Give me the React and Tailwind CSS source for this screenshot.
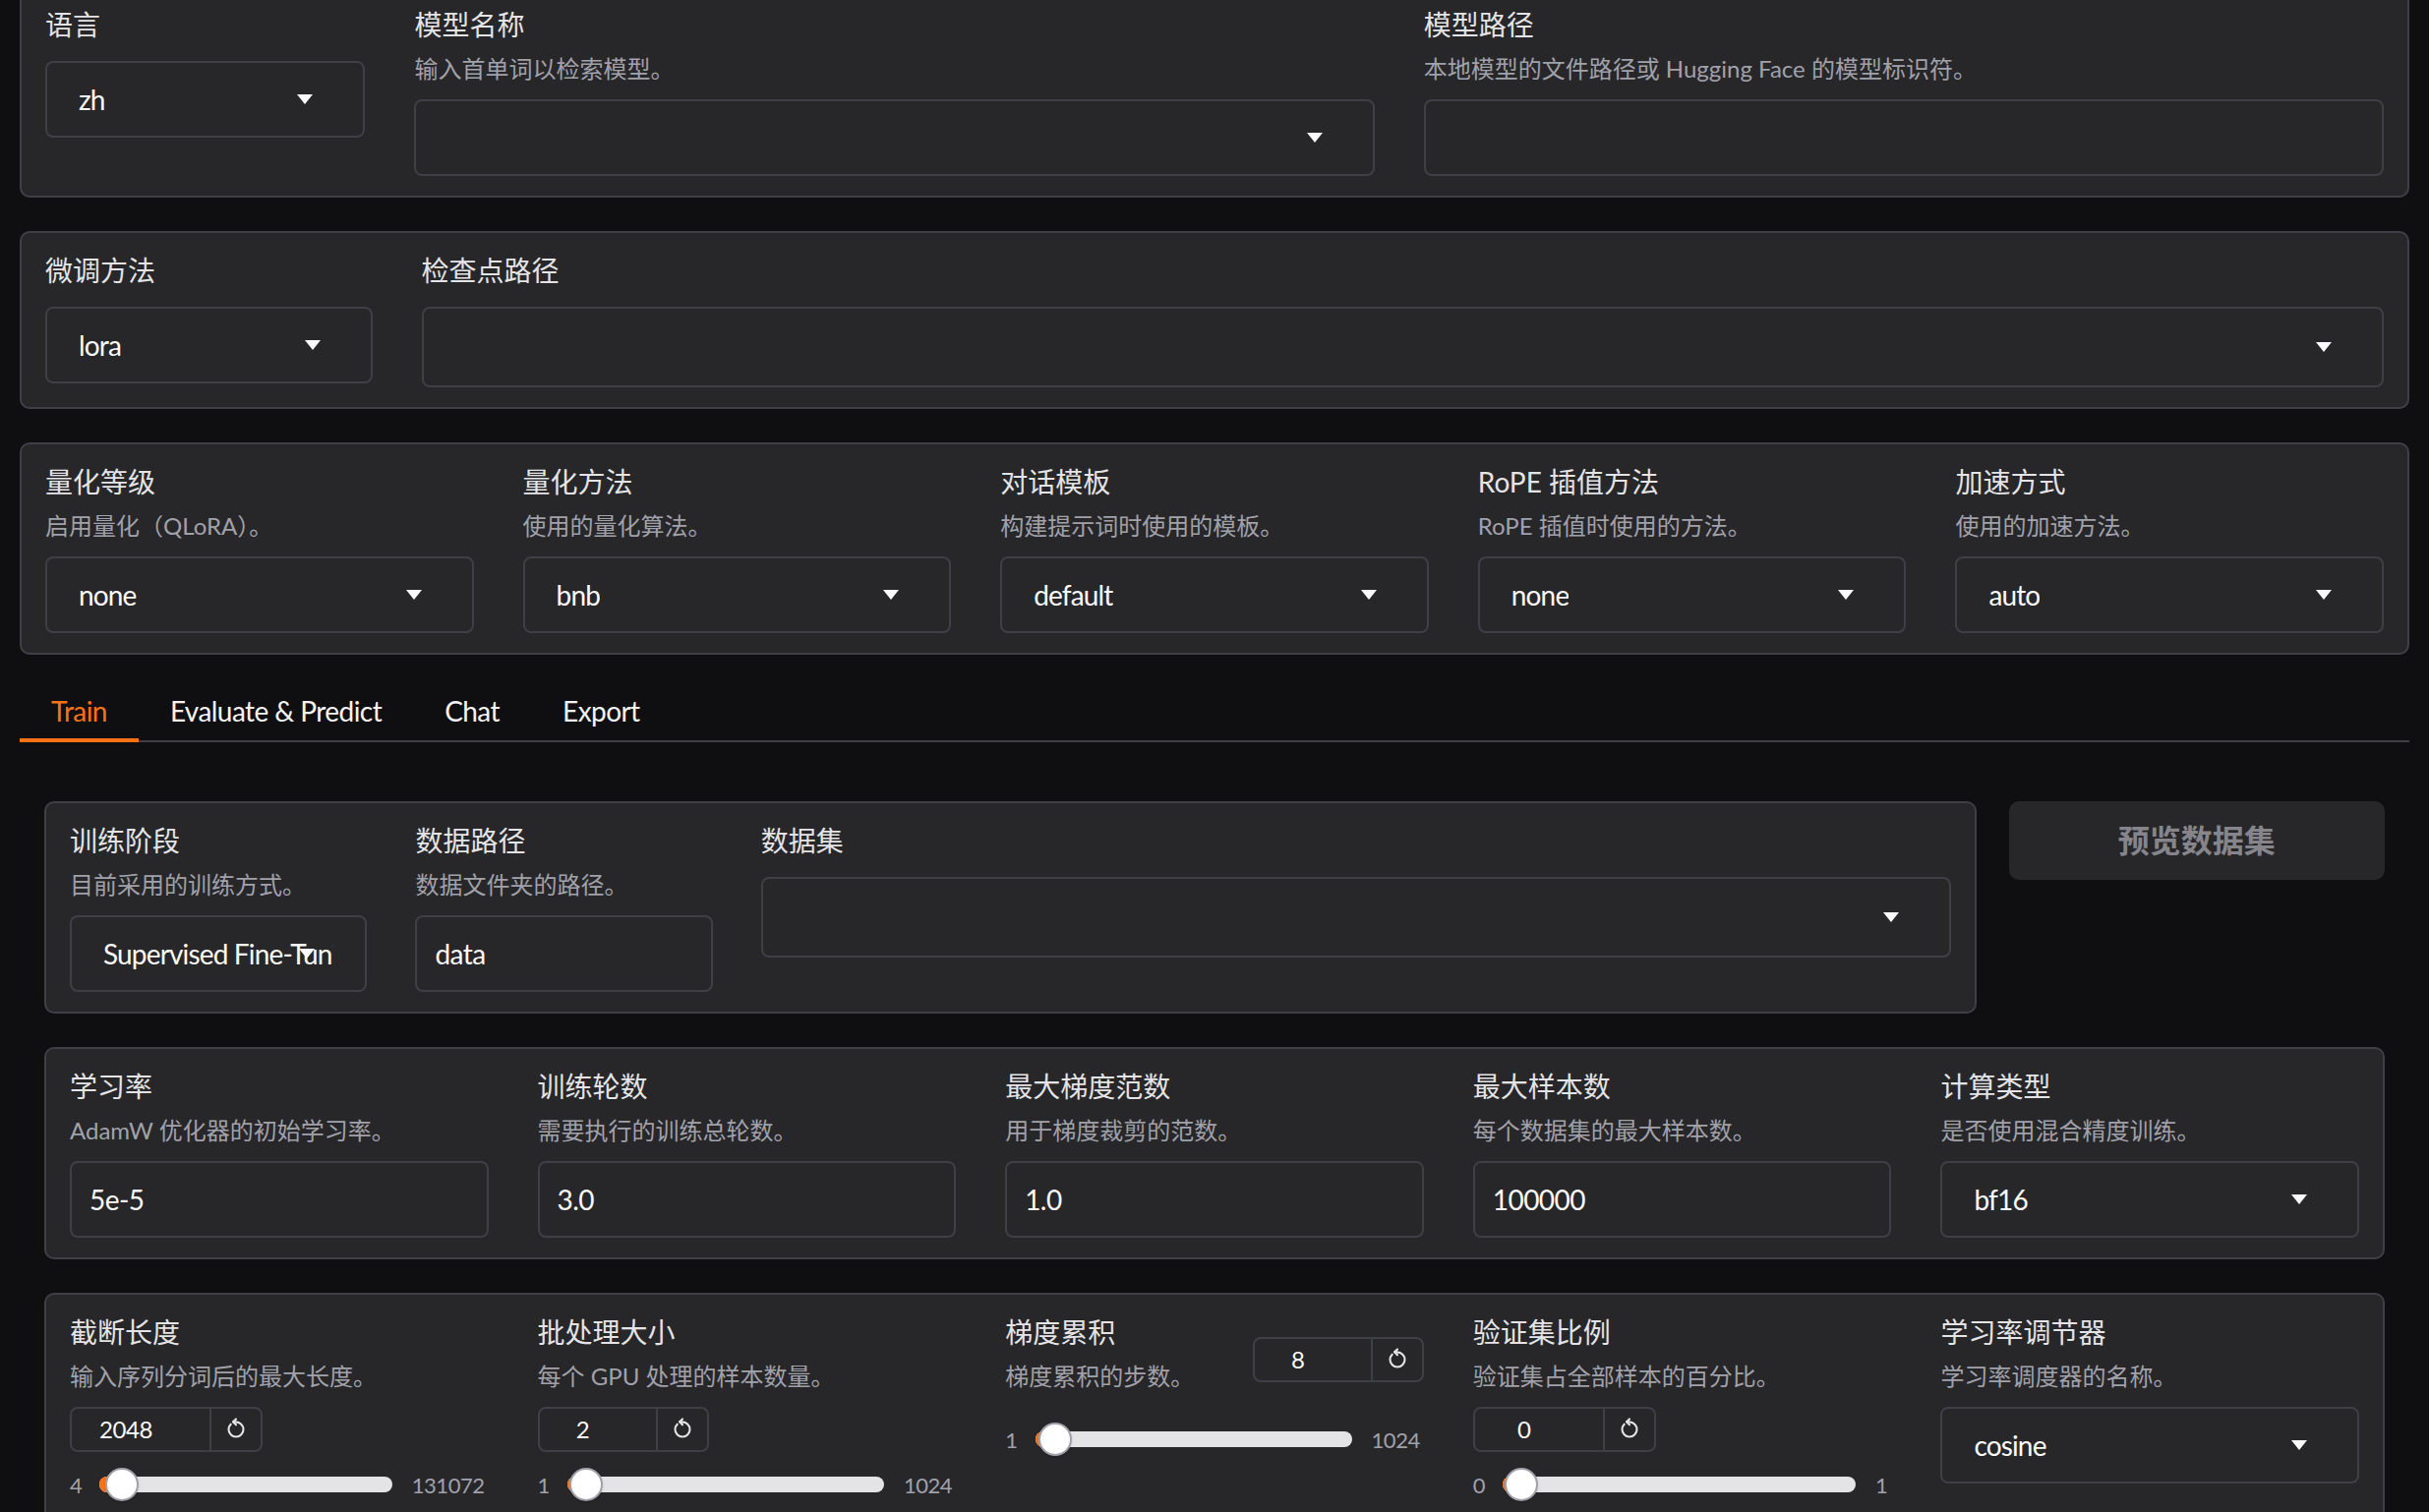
import { RotateCcw } from 'lucide-react';

const font = "font-['Lato','Noto_Sans_CJK_SC',sans-serif]";
const panel = 'rounded-[10px] border-2 border-[#3f3f46] bg-[#27272a] px-[24px] pt-[18px] pb-[20px]';

function Label({ children }) {
  return <div className="h-[40px] whitespace-nowrap text-[28px] leading-[40px] text-[#e4e4e7]">{children}</div>;
}

function Info({ children }) {
  return <div className="mt-[8px] h-[34px] whitespace-nowrap text-[24px] leading-[34px] text-[#a1a1aa]">{children}</div>;
}

function Caret() {
  return (
    <svg width="16" height="10" viewBox="0 0 16 10" className="absolute right-[51px] top-1/2 -translate-y-1/2">
      <polygon points="0,0 16,0 8,10" fill="#fafafa" />
    </svg>
  );
}

function Dropdown({ value, tall }) {
  return (
    <div className={`relative flex items-center rounded-[8px] border-2 border-[#3f3f46] bg-[#27272a] px-[32px] ${tall ? 'h-[82px]' : 'h-[78px]'}`}>
      <span className="min-w-0 overflow-hidden whitespace-nowrap text-[28px] tracking-[-0.03em] text-[#fafafa]">{value}</span>
      <Caret />
    </div>
  );
}

function TextBox({ value }) {
  return (
    <div className="flex h-[78px] items-center rounded-[8px] border-2 border-[#3f3f46] bg-[#27272a] px-[18px]">
      <span className="whitespace-nowrap text-[28px] tracking-[-0.02em] text-[#fafafa]">{value}</span>
    </div>
  );
}

function Field({ label, info, children }) {
  return (
    <div className="flex min-w-0 flex-col">
      <div className={info ? 'pb-[14px]' : 'pb-[17px]'}>
        <Label>{label}</Label>
        {info && <Info>{info}</Info>}
      </div>
      {children}
    </div>
  );
}

function NumberBox({ value, width }) {
  return (
    <div className={`flex h-[46px] rounded-[8px] border-2 border-[#3f3f46] ${width}`}>
      <div className="flex flex-1 items-center justify-center pr-[30px] text-[24px] tracking-[-0.02em] text-[#fafafa]">{value}</div>
      <div className="flex w-[52px] items-center justify-center border-l-2 border-[#3f3f46]">
        <RotateCcw size={20} strokeWidth={2.5} className="rotate-45 text-[#e4e4e7]" />
      </div>
    </div>
  );
}

function Slider({ min, max, frac }) {
  return (
    <div className="mt-[13px] flex h-[40px] items-center pr-[4px] text-[22px] tracking-[-0.02em] text-[#a1a1aa]">
      <span>{min}</span>
      <div className="relative ml-[18px] mr-[20px] h-[16px] flex-1 rounded-full bg-[#e4e4e7]">
        <div
          className="absolute inset-y-0 left-0 rounded-l-full bg-[#f97316]"
          style={{ width: `calc(19px + ${frac} * (100% - 36px))` }}
        />
        <div
          className="absolute top-1/2 h-[34px] w-[34px] -translate-y-1/2 rounded-full border-2 border-[#a1a1aa] bg-white shadow"
          style={{ left: `calc(2px + ${frac} * (100% - 36px))` }}
        />
      </div>
      <span>{max}</span>
    </div>
  );
}

function SliderField({ label, info, value, boxW, min, max, frac }) {
  return (
    <div className="flex min-w-0 flex-col">
      <div className="flex flex-wrap items-center justify-between">
        <div className="pb-[14px]">
          <Label>{label}</Label>
          <Info>{info}</Info>
        </div>
        <NumberBox value={value} width={boxW} />
      </div>
      <Slider min={min} max={max} frac={frac} />
    </div>
  );
}

export default function App() {
  const tabs = ['Train', 'Evaluate & Predict', 'Chat', 'Export'];

  return (
    <div className={`${font} flex h-[1538px] flex-col overflow-hidden bg-[#0f0f11] px-[20px]`}>
      <div className="-mt-[15px] flex flex-col gap-[34px]">
        <div className={`${panel} grid grid-cols-[minmax(0,1fr)_minmax(0,3fr)_minmax(0,3fr)] gap-x-[50px]`}>
          <Field label="语言">
            <Dropdown value="zh" />
          </Field>
          <Field label="模型名称" info="输入首单词以检索模型。">
            <Dropdown value="" />
          </Field>
          <Field label="模型路径" info="本地模型的文件路径或 Hugging Face 的模型标识符。">
            <TextBox value="" />
          </Field>
        </div>

        <div className={`${panel} grid grid-cols-[minmax(0,1fr)_minmax(0,6fr)] gap-x-[50px]`}>
          <Field label="微调方法">
            <Dropdown value="lora" />
          </Field>
          <Field label="检查点路径">
            <Dropdown value="" tall />
          </Field>
        </div>

        <div className={`${panel} grid grid-cols-5 gap-x-[50px]`}>
          <Field label="量化等级" info="启用量化（QLoRA）。">
            <Dropdown value="none" />
          </Field>
          <Field label="量化方法" info="使用的量化算法。">
            <Dropdown value="bnb" />
          </Field>
          <Field label="对话模板" info="构建提示词时使用的模板。">
            <Dropdown value="default" />
          </Field>
          <Field label="RoPE 插值方法" info="RoPE 插值时使用的方法。">
            <Dropdown value="none" />
          </Field>
          <Field label="加速方式" info="使用的加速方法。">
            <Dropdown value="auto" />
          </Field>
        </div>
      </div>

      <div className="mt-[27px] flex border-b-2 border-[#3f3f46]">
        {tabs.map((t, i) => (
          <div
            key={t}
            className={`relative flex h-[60px] items-center px-[32px] text-[28px] tracking-[-0.02em] ${i === 0 ? 'text-[#f97316]' : 'text-[#f4f4f5]'}`}
          >
            {t}
            {i === 0 && <div className="absolute inset-x-0 -bottom-[2px] h-[4px] bg-[#f97316]" />}
          </div>
        ))}
      </div>

      <div className="flex flex-col gap-[34px] px-[25px] pt-[60px]">
        <div className="flex items-start gap-[33px]">
          <div className={`${panel} grid min-w-0 flex-[5] grid-cols-[minmax(0,1fr)_minmax(0,1fr)_minmax(0,4fr)] gap-x-[49px]`}>
            <Field label="训练阶段" info="目前采用的训练方式。">
              <Dropdown value="Supervised Fine-Tuning" />
            </Field>
            <Field label="数据路径" info="数据文件夹的路径。">
              <TextBox value="data" />
            </Field>
            <Field label="数据集">
              <Dropdown value="" tall />
            </Field>
          </div>
          <div className="min-w-0 flex-[1]">
            <button className="flex h-[80px] w-full items-center justify-center rounded-[10px] bg-[#27272a] text-[32px] font-bold text-[#85858b]">
              预览数据集
            </button>
          </div>
        </div>

        <div className={`${panel} grid grid-cols-5 gap-x-[50px]`}>
          <Field label="学习率" info="AdamW 优化器的初始学习率。">
            <TextBox value="5e-5" />
          </Field>
          <Field label="训练轮数" info="需要执行的训练总轮数。">
            <TextBox value="3.0" />
          </Field>
          <Field label="最大梯度范数" info="用于梯度裁剪的范数。">
            <TextBox value="1.0" />
          </Field>
          <Field label="最大样本数" info="每个数据集的最大样本数。">
            <TextBox value="100000" />
          </Field>
          <Field label="计算类型" info="是否使用混合精度训练。">
            <Dropdown value="bf16" />
          </Field>
        </div>

        <div className={`${panel} grid grid-cols-5 gap-x-[50px]`}>
          <SliderField label="截断长度" info="输入序列分词后的最大长度。" value="2048" boxW="w-[196px]" min="4" max="131072" frac={0.0156} />
          <SliderField label="批处理大小" info="每个 GPU 处理的样本数量。" value="2" boxW="w-[174px]" min="1" max="1024" frac={0.001} />
          <SliderField label="梯度累积" info="梯度累积的步数。" value="8" boxW="w-[174px]" min="1" max="1024" frac={0.0068} />
          <SliderField label="验证集比例" info="验证集占全部样本的百分比。" value="0" boxW="w-[186px]" min="0" max="1" frac={0} />
          <Field label="学习率调节器" info="学习率调度器的名称。">
            <Dropdown value="cosine" />
          </Field>
        </div>
      </div>
    </div>
  );
}
